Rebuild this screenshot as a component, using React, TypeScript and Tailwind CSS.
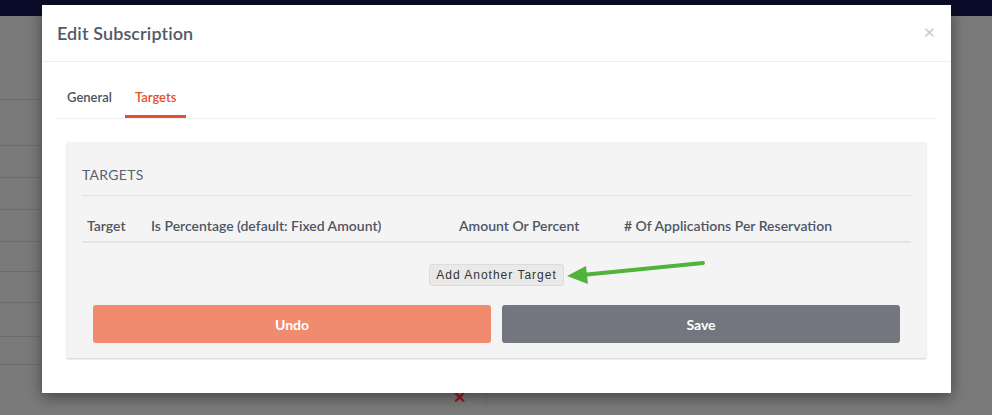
export default function App() {
  const rows = [100, 146, 178, 210, 242, 272, 303, 337, 365];
  return (
    <div
      className="relative w-[992px] h-[415px] overflow-hidden bg-[#7a7a7a]"
      style={{ fontFamily: "Lato, 'Open Sans', sans-serif" }}
    >
      {/* page behind the overlay */}
      <div className="h-[16px] bg-[#0b0c29]" />
      <div className="flex">
        <div className="w-[487px] border-r border-[#6f6f6f]">
          {rows.map((y, i) => (
            <div
              key={i}
              className="border-b border-[#6d6d6d]"
              style={{ height: (i === 0 ? y - 16 : y - rows[i - 1]) + "px" }}
            />
          ))}
          <div className="flex h-[40px] justify-end pr-[20px] pt-[24px] text-[#a01818] text-[16px] font-bold leading-none">
            ✕
          </div>
        </div>
        <div className="flex-1" />
      </div>

      {/* modal */}
      <div className="absolute left-[42px] top-[5px] w-[909px] h-[388px] bg-white shadow-[0_4px_14px_rgba(0,0,0,0.45)]">
        <div className="flex h-[57px] items-center justify-between border-b border-[#eeeeee] pl-[15px] pr-[16px]">
          <h4 className="text-[18px] font-semibold text-[#525a6a] tracking-[0.1px]">Edit Subscription</h4>
          <span className="text-[20px] leading-none text-[#c9c9c9] -mt-[4px]">×</span>
        </div>

        <div className="px-[15px]">
          <div className="mt-[18px] flex gap-[3px] border-b border-[#f0f0f0]">
            <div className="h-[38px] px-[10px] pt-[8px] text-[13px] font-semibold text-[#4b5160]">General</div>
            <div className="h-[38px] px-[10px] pt-[8px] text-[13px] font-semibold text-[#e2512d] border-b-[3px] border-[#e2512d]">
              Targets
            </div>
          </div>

          <div className="relative mx-[10px] mt-[23px] bg-[#f4f4f4] px-[15px] pb-[15px] shadow-[0_1px_2px_rgba(0,0,0,0.2)]">
            <div className="flex h-[54px] items-end pb-[10px] border-b border-[#e3e3e3]">
              <span className="text-[14px] text-[#5a6170] tracking-[0.3px]">TARGETS</span>
            </div>
            <div className="flex h-[47px] items-end pb-[5px] border-b-2 border-[#e4e4e4] text-[14px] font-semibold text-[#4f5564]">
              <div className="w-[64px] pl-[5px]">Target</div>
              <div className="w-[308px] pl-[5px]">Is Percentage (default: Fixed Amount)</div>
              <div className="w-[165px] pl-[5px]">Amount Or Percent</div>
              <div className="flex-1 pl-[5px]">
                # Of Applications Per Reservation
              </div>
            </div>

            <div className="flex justify-center pt-[21px]">
              <button
                className="h-[22px] rounded-[3px] border border-[#dcdcdc] bg-[#e9e9e9] px-[6px] text-[12px] tracking-[1px] text-[#333]"
                style={{ fontFamily: "'Liberation Sans', Arial, sans-serif" }}
              >
                Add Another Target
              </button>
            </div>

            <div className="mt-[19px] grid grid-cols-2 gap-[11px] px-[11px]">
              <button className="h-[38px] rounded-[3px] bg-[#f08b70] text-[14px] font-bold text-white">Undo</button>
              <button className="h-[38px] rounded-[3px] bg-[#73767e] text-[14px] font-bold text-white">Save</button>
            </div>

            <svg
              className="absolute left-[499px] top-[117px]"
              width="142"
              height="26"
              viewBox="0 0 142 26"
            >
              <line x1="137" y1="4" x2="16" y2="16" stroke="#52b33a" strokeWidth="4" strokeLinecap="round" />
              <polygon points="1,17 20,7 22,25" fill="#52b33a" />
            </svg>
          </div>
        </div>
      </div>
    </div>
  );
}
